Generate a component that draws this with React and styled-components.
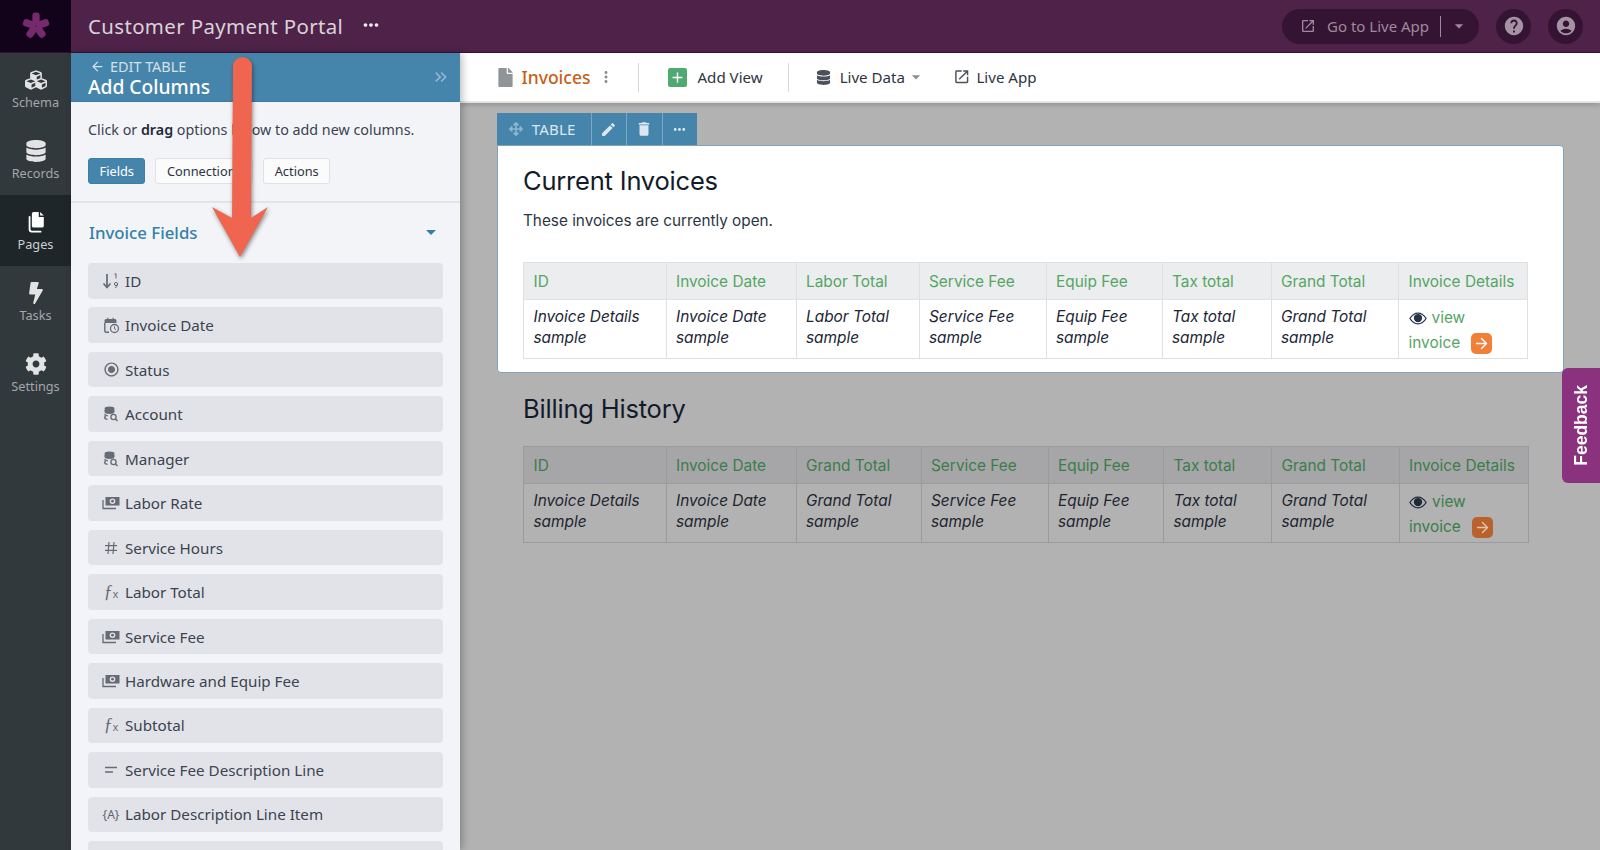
import React from "react";
import styled, { createGlobalStyle } from "styled-components";
import { FaCubes, FaDatabase, FaBolt, FaCog, FaFile, FaArrowsAlt } from "react-icons/fa";
import {
  MdEdit,
  MdDelete,
  MdMoreHoriz,
  MdMoreVert,
  MdHelp,
  MdAccountCircle,
  MdOpenInNew,
  MdArrowDropDown,
  MdAdd,
  MdKeyboardDoubleArrowRight,
  MdRadioButtonChecked,
} from "react-icons/md";
import { ArrowLeft, ArrowRight } from "lucide-react";

const plex = `"Noto Sans", "Open Sans", sans-serif`;
const inter = `Inter, "Liberation Sans", sans-serif`;

const GlobalStyle = createGlobalStyle`
  html, body {
    margin: 0;
    padding: 0;
    height: 100%;
    overflow: hidden;
    background: #b2b2b2;
  }
  * {
    box-sizing: border-box;
  }
`;

const Page = styled.div`
  position: relative;
  display: flex;
  flex-direction: column;
  width: 1600px;
  height: 850px;
  overflow: hidden;
  font-family: ${plex};
`;

const TopBar = styled.header`
  display: flex;
  align-items: center;
  flex: 0 0 53px;
  min-height: 0;
  padding-right: 17px;
  background: #4f2349;
  border-bottom: 1px solid #3a0f35;
`;

const LogoCell = styled.div`
  display: flex;
  align-items: center;
  justify-content: center;
  align-self: stretch;
  width: 71px;
  background: #12031a;
`;

const AppTitle = styled.h1`
  margin: 0 0 0 17px;
  font-size: 20.4px;
  font-weight: 400;
  letter-spacing: 0.38px;
  color: #d9d2d8;
`;

const TitleMenu = styled.span`
  display: flex;
  margin-left: 17px;
  margin-top: -3px;
  color: #f1edf0;
  font-size: 22px;
`;

const TopActions = styled.div`
  display: flex;
  align-items: center;
  gap: 17px;
  margin-left: auto;
`;

const LivePill = styled.div`
  display: flex;
  align-items: center;
  width: 197px;
  height: 35px;
  padding-left: 18px;
  border-radius: 18px;
  background: #351433;
  color: #9e8a9d;
  font-size: 15px;
  line-height: 31px;
  svg:first-child {
    margin-right: 11px;
    font-size: 16px;
  }
`;

const PillDivider = styled.span`
  width: 1px;
  height: 21px;
  margin: 0 8px 0 11px;
  background: #9e8a9d;
`;

const RoundButton = styled.div`
  display: flex;
  align-items: center;
  justify-content: center;
  width: 35px;
  height: 35px;
  border-radius: 50%;
  background: #351433;
  color: #a592a4;
  font-size: 22px;
`;

const Body = styled.div`
  display: flex;
  flex: 1;
  min-height: 0;
`;

const Rail = styled.nav`
  display: flex;
  flex-direction: column;
  flex: 0 0 71px;
  background: #32393d;
`;

const RailItem = styled.div`
  display: flex;
  flex-direction: column;
  align-items: center;
  height: 71px;
  padding-top: 16px;
  gap: 3px;
  background: ${(p) => (p.$active ? "#1f2629" : "transparent")};
  color: ${(p) => (p.$active ? "#ccced0" : "#a3a7a9")};
  font-size: 12.7px;
  line-height: 17px;
  svg {
    height: 22px;
    width: 22px;
    color: ${(p) => (p.$active ? "#ffffff" : "#e2e3e4")};
  }
`;

const Panel = styled.aside`
  display: flex;
  flex-direction: column;
  flex: 0 0 389px;
  background: #f3f4f8;
  box-shadow: 2px 0 8px rgba(0, 0, 0, 0.28);
  z-index: 1;
`;

const PanelHeader = styled.div`
  position: relative;
  flex: 0 0 49px;
  padding: 5px 17px 0;
  background: #4685ab;
  border-bottom: 1px solid #3f7a9e;
`;

const BackLink = styled.div`
  display: flex;
  align-items: center;
  gap: 5px;
  height: 17px;
  padding-left: 2px;
  font-size: 14.4px;
  color: #d3e1ea;
`;

const PanelTitle = styled.h2`
  margin: 0;
  font-size: 19.2px;
  line-height: 24px;
  font-weight: 500;
  color: #ffffff;
`;

const Collapse = styled.span`
  position: absolute;
  right: 9px;
  top: 14px;
  display: flex;
  color: #8fb6ce;
  font-size: 20px;
`;

const Hint = styled.p`
  margin: 0;
  padding: 18px 17px 0;
  font-size: 14.3px;
  line-height: 19px;
  color: #3a4350;
  b {
    font-weight: 600;
    color: #1f2a38;
  }
`;

const FilterRow = styled.div`
  display: flex;
  gap: 10px;
  padding: 19px 17px 17px;
  border-bottom: 2px solid #e3e4e8;
`;

const FilterButton = styled.button`
  height: 26px;
  padding: 0 10.5px;
  border-radius: 3px;
  border: 1px solid ${(p) => (p.$active ? "#3f7ea4" : "#e0e1e5")};
  background: ${(p) => (p.$active ? "#4685ab" : "#fbfbfc")};
  color: ${(p) => (p.$active ? "#ffffff" : "#2c3440")};
  font-family: ${plex};
  font-size: 12.8px;
`;

const SectionHead = styled.div`
  display: flex;
  align-items: center;
  justify-content: space-between;
  padding: 17px 17px 19px 18px;
  font-size: 16.8px;
  line-height: 23px;
  font-weight: 500;
  color: #3480a8;
  svg {
    color: #3480a8;
    font-size: 24px;
  }
`;

const FieldList = styled.div`
  display: flex;
  flex-direction: column;
  gap: 8.97px;
  padding: 0 17px;
`;

const FieldItem = styled.div`
  display: flex;
  align-items: center;
  flex: 0 0 35.5px;
  padding-left: 13px;
  border-radius: 4px;
  background: #e2e3e8;
  color: #3b4450;
  font-size: 15.2px;
`;

const FieldIcon = styled.span`
  display: flex;
  align-items: center;
  justify-content: center;
  width: 20px;
  height: 20px;
  margin-right: 4px;
  color: #666b74;
  font-size: 17px;
`;

const FormulaIcon = styled.span`
  font-family: "Liberation Serif", serif;
  font-style: italic;
  font-size: 18px;
  color: #666b74;
  sub {
    font-style: normal;
    font-family: "Liberation Sans", sans-serif;
    font-size: 11px;
    vertical-align: baseline;
  }
`;

const TemplateIcon = styled.span`
  font-family: ${plex};
  font-size: 12px;
  color: #5f646d;
  white-space: nowrap;
`;

const Main = styled.main`
  display: flex;
  flex-direction: column;
  flex: 1;
  min-width: 0;
  background: #b2b2b2;
`;

const Toolbar = styled.div`
  display: flex;
  align-items: center;
  flex: 0 0 50px;
  padding-left: 36px;
  background: #ffffff;
  border-bottom: 2px solid #e4e4e4;
  box-shadow: 0 2px 5px rgba(0, 0, 0, 0.18);
  color: #2e3540;
  font-size: 15.1px;
`;

const ToolbarDivider = styled.span`
  width: 1px;
  height: 29px;
  background: #d8d8d8;
  margin: ${(p) => p.$margin};
`;

const PageName = styled.span`
  margin-left: 6.5px;
  font-size: 17.5px;
  font-weight: 500;
  color: #c65f17;
`;

const ToolbarItem = styled.span`
  display: flex;
  align-items: center;
  gap: ${(p) => p.$gap ?? 9}px;
  white-space: nowrap;
`;

const GreenPlus = styled.span`
  display: flex;
  align-items: center;
  justify-content: center;
  width: 19px;
  height: 19px;
  border-radius: 2px;
  background: #4faa72;
  color: #ffffff;
  font-size: 17px;
`;

const Canvas = styled.div`
  position: relative;
  flex: 1;
  padding: 10px 36px 0 37px;
`;

const BlockTabs = styled.div`
  display: flex;
  width: 200px;
  height: 32px;
  background: #4685ab;
  color: #dce8ef;
`;

const BlockTab = styled.div`
  display: flex;
  align-items: center;
  justify-content: center;
  flex: 0 0 ${(p) => p.$width}px;
  gap: 9px;
  padding-right: ${(p) => (p.$first ? 3 : 0)}px;
  border-left: ${(p) => (p.$first ? "0" : "1px solid #7aa8c4")};
  font-size: 15px;
  letter-spacing: 0.2px;
`;

const Card = styled.section`
  height: 228px;
  padding: 19px 35px 0 25px;
  margin-bottom: 19px;
  background: #ffffff;
  border: 1px solid #7fa3bc;
  border-radius: 0 4px 4px 4px;
`;

const BlockTitle = styled.h3`
  margin: 0;
  font-family: ${inter};
  font-size: 25.5px;
  line-height: 32px;
  font-weight: 400;
  letter-spacing: -0.2px;
  color: #131b2b;
`;

const BlockText = styled.p`
  margin: 14px 0 0;
  font-family: ${inter};
  font-size: 15.3px;
  line-height: 20px;
  color: #2c3545;
`;

const PlainBlock = styled.section`
  padding: 1px 35px 0 26px;
`;

const DataTable = styled.table`
  width: 1004px;
  margin-top: ${(p) => p.$top}px;
  table-layout: fixed;
  border-collapse: collapse;
  font-family: ${inter};
  font-size: 15.4px;
  th,
  td {
    border: 1.5px solid ${(p) => (p.$dim ? "#9b9b9c" : "#dfe0e2")};
    padding: 0 9.5px;
    text-align: left;
    vertical-align: top;
  }
  th {
    height: 37px;
    vertical-align: middle;
    font-weight: 400;
    background: ${(p) => (p.$dim ? "#a6a6a8" : "#ecedef")};
    color: ${(p) => (p.$dim ? "#3b7d4a" : "#55a563")};
  }
  td {
    height: 59px;
    padding-top: 6px;
    font-style: italic;
    line-height: 21px;
    color: ${(p) => (p.$dim ? "#1e2530" : "#1c2636")};
  }
`;

const ViewLink = styled.div`
  font-style: normal;
  line-height: 24.5px;
  color: ${(p) => (p.$dim ? "#3b7d4a" : "#55a563")};
  > svg {
    vertical-align: -2px;
    margin-right: 5px;
    color: ${(p) => (p.$dim ? "#1f2a38" : "#26344a")};
  }
`;

const GoButton = styled.span`
  display: inline-flex;
  align-items: center;
  justify-content: center;
  width: 21px;
  height: 21px;
  margin-left: 11px;
  vertical-align: -4px;
  border-radius: 5px;
  background: ${(p) => (p.$dim ? "#b9622d" : "#f17f37")};
  color: ${(p) => (p.$dim ? "#e3c3ae" : "#ffffff")};
`;

const Feedback = styled.div`
  position: absolute;
  right: 0;
  top: 368px;
  display: flex;
  align-items: center;
  justify-content: center;
  width: 38px;
  height: 115px;
  border-radius: 6px 0 0 6px;
  background: #8a327e;
  color: #ffffff;
  font-family: "Liberation Sans", sans-serif;
  font-size: 17.5px;
  font-weight: 700;
  span {
    writing-mode: vertical-rl;
    transform: rotate(180deg);
  }
`;

const ArrowOverlay = styled.svg`
  position: absolute;
  left: 205px;
  top: 50px;
  width: 70px;
  height: 215px;
  overflow: visible;
  z-index: 5;
  filter: drop-shadow(1px 2px 2px rgba(0, 0, 0, 0.45));
`;

function Logo() {
  return (
    <svg width="28" height="28" viewBox="0 0 26 26" fill="#742a6c">
      <g>
        <rect x="9.6" y="0.5" width="6.8" height="12" rx="2.8" />
        <rect x="9.6" y="0.5" width="6.8" height="12" rx="2.8" transform="rotate(72 13 13)" />
        <rect x="9.6" y="0.5" width="6.8" height="12" rx="2.8" transform="rotate(144 13 13)" />
        <rect x="9.6" y="0.5" width="6.8" height="12" rx="2.8" transform="rotate(216 13 13)" />
        <rect x="9.6" y="0.5" width="6.8" height="12" rx="2.8" transform="rotate(288 13 13)" />
      </g>
    </svg>
  );
}

function PagesIcon() {
  return (
    <svg viewBox="0 0 24 24" fill="none">
      <path
        d="M5 6.5V20a2.5 2.5 0 0 0 2.5 2.5H17"
        stroke="currentColor"
        strokeWidth="2"
        strokeLinecap="round"
      />
      <path
        d="M9.5 1H15v5.5h5.5V16a2 2 0 0 1-2 2h-9a2 2 0 0 1-2-2V3a2 2 0 0 1 2-2z M16.5 1l4 4h-4z"
        fill="currentColor"
      />
    </svg>
  );
}

function EyeIcon() {
  return (
    <svg width="18" height="13" viewBox="0 0 20 14" fill="none">
      <path
        d="M1 7C3.5 3 6.5 1 10 1s6.5 2 9 6c-2.5 4-5.5 6-9 6S3.5 11 1 7z"
        stroke="currentColor"
        strokeWidth="1.4"
      />
      <circle cx="10" cy="6.5" r="4.6" fill="currentColor" />
    </svg>
  );
}

function SortIcon() {
  return (
    <svg width="20" height="18" viewBox="0 0 20 18" fill="none">
      <path d="M6 2v13M2.5 11.5 6 15.5l3.5-4" stroke="currentColor" strokeWidth="1.7" />
      <path d="M13.5 2.5 15 1.5v5" stroke="currentColor" strokeWidth="1" />
      <circle cx="15" cy="12" r="1.6" stroke="currentColor" strokeWidth="1" />
      <path d="M16.5 12c0 2-1 3.5-2.5 3.5" stroke="currentColor" strokeWidth="1" />
    </svg>
  );
}

function DateIcon() {
  return (
    <svg width="17" height="17" viewBox="0 0 17 17" fill="none">
      <path d="M3 2h1.2V0.8h1.2V2h4.2V0.8h1.2V2H12a1.5 1.5 0 0 1 1.5 1.5V6h-12V3.5A1.5 1.5 0 0 1 3 2z" fill="currentColor" />
      <path d="M1.8 6v8c0 .8.6 1.2 1.2 1.2h3" stroke="currentColor" strokeWidth="1.4" />
      <circle cx="11.5" cy="11.5" r="4" fill="#e2e3e8" stroke="currentColor" strokeWidth="1.3" />
      <path d="M11.5 9.3v2.4l1.6 1" stroke="currentColor" strokeWidth="1" />
    </svg>
  );
}

function LookupIcon() {
  return (
    <svg width="16" height="16" viewBox="0 0 16 16" fill="none">
      <ellipse cx="6.5" cy="3" rx="5" ry="2.4" fill="currentColor" />
      <path d="M1.5 4v2c0 1 2 2 5 2s5-1 5-2V4" fill="currentColor" />
      <path d="M1.5 8c.6 1 2 1.6 3.5 1.8M1.5 9.5l1 1.2-1 1.2c.5.8 1.6 1.3 3 1.5" stroke="currentColor" strokeWidth="1.2" />
      <circle cx="10.5" cy="11" r="2.6" stroke="currentColor" strokeWidth="1.3" />
      <path d="m12.5 13 2 2" stroke="currentColor" strokeWidth="1.4" />
    </svg>
  );
}

function MoneyIcon() {
  return (
    <svg width="18" height="14" viewBox="0 0 18 14" fill="none">
      <path fillRule="evenodd" d="M3.5 1h14v8.5h-14zM10.5 2.6a2.8 2.6 0 1 0 0 5.3 2.8 2.6 0 0 0 0-5.3z" fill="currentColor" />
      <circle cx="10.5" cy="5.2" r="1.4" fill="currentColor" />
      <path d="M1 4v8.5h13" stroke="currentColor" strokeWidth="1.3" />
    </svg>
  );
}

function HashIcon() {
  return (
    <svg width="14" height="14" viewBox="0 0 14 14" fill="none" stroke="currentColor" strokeWidth="1.2">
      <path d="M5 1 4 13M10 1 9 13M1 4.7h12M1 9.3h12" />
    </svg>
  );
}

function LinesIcon() {
  return (
    <svg width="14" height="8" viewBox="0 0 14 8" fill="none" stroke="currentColor" strokeWidth="1.4">
      <path d="M1 1.5h12M1 6h8" />
    </svg>
  );
}

const FIELDS = [
  { label: "ID", icon: <SortIcon /> },
  { label: "Invoice Date", icon: <DateIcon /> },
  { label: "Status", icon: <MdRadioButtonChecked /> },
  { label: "Account", icon: <LookupIcon /> },
  { label: "Manager", icon: <LookupIcon /> },
  { label: "Labor Rate", icon: <MoneyIcon /> },
  { label: "Service Hours", icon: <HashIcon /> },
  { label: "Labor Total", icon: <FormulaIcon>ƒ<sub>x</sub></FormulaIcon> },
  { label: "Service Fee", icon: <MoneyIcon /> },
  { label: "Hardware and Equip Fee", icon: <MoneyIcon /> },
  { label: "Subtotal", icon: <FormulaIcon>ƒ<sub>x</sub></FormulaIcon> },
  { label: "Service Fee Description Line", icon: <LinesIcon /> },
  { label: "Labor Description Line Item", icon: <TemplateIcon>{"{A}"}</TemplateIcon> },
  { label: "", icon: null },
];

const CURRENT = {
  widths: [142.5, 130, 123, 127, 116, 109, 127.5, 129],
  columns: ["ID", "Invoice Date", "Labor Total", "Service Fee", "Equip Fee", "Tax total", "Grand Total"],
  samples: ["Invoice Details", "Invoice Date", "Labor Total", "Service Fee", "Equip Fee", "Tax total", "Grand Total"],
};

const HISTORY = {
  widths: [142.5, 130, 125, 127, 115.5, 108, 127.5, 129],
  columns: ["ID", "Invoice Date", "Grand Total", "Service Fee", "Equip Fee", "Tax total", "Grand Total"],
  samples: ["Invoice Details", "Invoice Date", "Grand Total", "Service Fee", "Equip Fee", "Tax total", "Grand Total"],
};

function InvoiceTable({ data, dim, top }) {
  return (
    <DataTable $dim={dim} $top={top}>
      <colgroup>
        {data.widths.map((w, i) => (
          <col key={i} style={{ width: w }} />
        ))}
      </colgroup>
      <thead>
        <tr>
          {data.columns.map((c, i) => (
            <th key={i}>{c}</th>
          ))}
          <th>Invoice Details</th>
        </tr>
      </thead>
      <tbody>
        <tr>
          {data.samples.map((s, i) => (
            <td key={i}>
              {s}
              <br />
              sample
            </td>
          ))}
          <td>
            <ViewLink $dim={dim}>
              <EyeIcon />
              view
              <br />
              invoice
              <GoButton $dim={dim}>
                <ArrowRight size={17} strokeWidth={2} />
              </GoButton>
            </ViewLink>
          </td>
        </tr>
      </tbody>
    </DataTable>
  );
}

export default function App() {
  return (
    <Page>
      <GlobalStyle />
      <TopBar>
        <LogoCell>
          <Logo />
        </LogoCell>
        <AppTitle>Customer Payment Portal</AppTitle>
        <TitleMenu>
          <MdMoreHoriz />
        </TitleMenu>
        <TopActions>
          <LivePill>
            <MdOpenInNew />
            Go to Live App
            <PillDivider />
            <MdArrowDropDown size={20} />
          </LivePill>
          <RoundButton>
            <MdHelp />
          </RoundButton>
          <RoundButton>
            <MdAccountCircle />
          </RoundButton>
        </TopActions>
      </TopBar>
      <Body>
        <Rail>
          <RailItem>
            <FaCubes />
            Schema
          </RailItem>
          <RailItem>
            <FaDatabase />
            Records
          </RailItem>
          <RailItem $active>
            <PagesIcon />
            Pages
          </RailItem>
          <RailItem>
            <FaBolt />
            Tasks
          </RailItem>
          <RailItem>
            <FaCog />
            Settings
          </RailItem>
        </Rail>
        <Panel>
          <PanelHeader>
            <BackLink>
              <ArrowLeft size={15} />
              EDIT TABLE
            </BackLink>
            <PanelTitle>Add Columns</PanelTitle>
            <Collapse>
              <MdKeyboardDoubleArrowRight />
            </Collapse>
          </PanelHeader>
          <Hint>
            Click or <b>drag</b> options below to add new columns.
          </Hint>
          <FilterRow>
            <FilterButton $active>Fields</FilterButton>
            <FilterButton>Connections</FilterButton>
            <FilterButton>Actions</FilterButton>
          </FilterRow>
          <SectionHead>
            Invoice Fields
            <MdArrowDropDown />
          </SectionHead>
          <FieldList>
            {FIELDS.map((f, i) => (
              <FieldItem key={i}>
                <FieldIcon>{f.icon}</FieldIcon>
                {f.label}
              </FieldItem>
            ))}
          </FieldList>
        </Panel>
        <Main>
          <Toolbar>
            <ToolbarItem $gap={0}>
              <FaFile size={19} color="#8f9498" />
              <PageName>Invoices</PageName>
            </ToolbarItem>
            <ToolbarItem>
              <MdMoreVert size={18} color="#8a8f94" style={{ marginLeft: 7 }} />
            </ToolbarItem>
            <ToolbarDivider $margin="0 29px 0 23px" />
            <ToolbarItem $gap={10}>
              <GreenPlus>
                <MdAdd />
              </GreenPlus>
              Add View
            </ToolbarItem>
            <ToolbarDivider $margin="0 27px 0 25px" />
            <ToolbarItem>
              <FaDatabase size={15} color="#4b505a" />
              Live Data
              <MdArrowDropDown size={20} color="#8a8f94" style={{ marginLeft: -8, marginRight: 27 }} />
            </ToolbarItem>
            <ToolbarItem $gap={6}>
              <MdOpenInNew size={17.5} color="#4b505a" />
              Live App
            </ToolbarItem>
          </Toolbar>
          <Canvas>
            <BlockTabs>
              <BlockTab $first $width={93.5}>
                <FaArrowsAlt size={14} color="#8fb6ce" />
                TABLE
              </BlockTab>
              <BlockTab $width={35.5}>
                <MdEdit size={17} />
              </BlockTab>
              <BlockTab $width={35.5}>
                <MdDelete size={18} />
              </BlockTab>
              <BlockTab $width={35.5}>
                <MdMoreHoriz size={17} />
              </BlockTab>
            </BlockTabs>
            <Card>
              <BlockTitle>Current Invoices</BlockTitle>
              <BlockText>These invoices are currently open.</BlockText>
              <InvoiceTable data={CURRENT} top={31} />
            </Card>
            <PlainBlock>
              <BlockTitle>Billing History</BlockTitle>
              <InvoiceTable data={HISTORY} dim top={21} />
            </PlainBlock>
          </Canvas>
        </Main>
      </Body>
      <Feedback>
        <span>Feedback</span>
      </Feedback>
      <ArrowOverlay viewBox="0 0 70 215">
        <path
          d="M28 16a9.5 9 0 0 1 19 0L46 168 63 157 35 207 7 157 27 168z"
          fill="#f0654f"
        />
      </ArrowOverlay>
    </Page>
  );
}
